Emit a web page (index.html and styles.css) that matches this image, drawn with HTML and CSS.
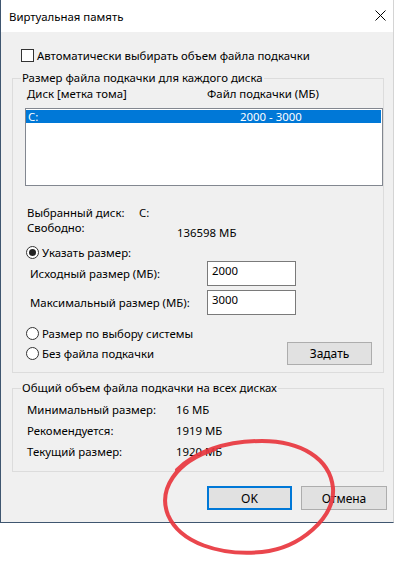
FILE: index.html
```html
<!DOCTYPE html>
<html lang="ru">
<head>
  <meta charset="UTF-8" />
  <title>Виртуальная память</title>
  <meta name="viewport" content="width=device-width, initial-scale=1.0"/>
  <link rel="stylesheet" href="styles.css">
</head>
<body>

<div class="window">
  <div class="titlebar">
    <span class="title">Виртуальная память</span>
    <svg class="close" width="11" height="11" viewBox="0 0 11 11"><path d="M0.5 0.5L10.5 10.5M10.5 0.5L0.5 10.5" stroke="#000" stroke-width="1"/></svg>
  </div>

  <div class="body">
    <div class="check-row"><span class="checkbox"></span>Автоматически выбирать объем файла подкачки</div>

    <div class="group group-disks">
      <div class="group-title">Размер файла подкачки для каждого диска</div>
      <div class="list-head"><span class="col-disk">Диск [метка тома]</span><span>Файл подкачки (МБ)</span></div>
      <div class="list">
        <div class="list-row selected"><span class="col-drive">C:</span><span>2000 - 3000</span></div>
      </div>

      <div class="info">
        <div class="info-row"><span class="info-label">Выбранный диск:</span><span>C:</span></div>
        <div class="info-row"><span class="info-label wide">Свободно:</span><span class="free-value">136598 МБ</span></div>
      </div>

      <div class="radio-row first"><span class="radio checked"></span>Указать размер:</div>
      <div class="size-row"><span class="size-label">Исходный размер (МБ):</span><div class="field">2000</div></div>
      <div class="size-row second"><span class="size-label">Максимальный размер (МБ):</span><div class="field">3000</div></div>

      <div class="radio-row system"><span class="radio"></span>Размер по выбору системы</div>
      <div class="set-row">
        <div class="radio-row"><span class="radio"></span>Без файла подкачки</div>
        <button class="btn">Задать</button>
      </div>
    </div>

    <div class="group group-total">
      <div class="group-title">Общий объем файла подкачки на всех дисках</div>
      <div class="totals">
        <div class="total-row"><span class="total-label">Минимальный размер:</span><span>16 МБ</span></div>
        <div class="total-row"><span class="total-label">Рекомендуется:</span><span>1919 МБ</span></div>
        <div class="total-row"><span class="total-label">Текущий размер:</span><span>1920 МБ</span></div>
      </div>
    </div>

    <div class="actions">
      <button class="btn default">OK</button>
      <button class="btn">Отмена</button>
    </div>
  </div>
</div>

<!-- red marker loop drawn over the OK button -->
<svg class="marker" width="396" height="568" viewBox="0 0 396 568">
  <path d="M177 470 C195 452, 225 441, 262 441 C300 441, 330 458, 333 488 C335 518, 300 548, 262 552 C220 556, 180 543, 168 515 C158 490, 175 462, 215 449"
        fill="none" stroke="#e8363e" stroke-width="4" stroke-linecap="round" opacity="0.92"/>
</svg>

</body>
</html>
```

FILE: styles.css
```css
body { margin: 0; background: #fff; color: #000; font-family: "Noto Sans", "Open Sans", sans-serif; font-size: 11.4px; }

.window {
  position: relative;
  width: 394px; box-sizing: border-box;
  border-left: 1px solid #3f5670; border-right: 1px solid #d4d4d4; border-bottom: 1px solid #3f5670;
}
.titlebar {
  height: 32px; background: #fff;
  display: flex; align-items: center; justify-content: space-between;
  padding: 0 7px 0 8px;
}
.close { margin-top: -1px; }

.body { background: #f0f0f0; height: 490px; padding-top: 15px; box-sizing: border-box; }

.check-row { display: flex; align-items: center; height: 16px; padding-left: 20px; }
.checkbox { width: 13px; height: 13px; box-sizing: border-box; border: 1px solid #333; background: #fff; margin-right: 3px; }

.group { width: 372px; box-sizing: border-box; margin-left: 11px; border: 1px solid #dcdcdc; }
.group-disks { margin-top: 15px; padding-bottom: 7px; }
.group-total { margin-top: 15px; padding-bottom: 9px; }
.group-title {
  width: max-content; margin: -9px 0 0 8px; padding: 0 1px;
  line-height: 16px; background: #f0f0f0;
}

.list-head { display: flex; line-height: 16px; padding-left: 14px; }
.col-disk { width: 180px; }

.list {
  margin: 6px 0 0 12px; width: 358px; height: 78px; box-sizing: border-box;
  border: 1px solid #828790; background: #fff; padding-top: 1px;
}
.list-row { display: flex; height: 13px; line-height: 13px; padding-left: 2px; margin-right: 1px; }
.list-row.selected { background: #0078d7; color: #fff; }
.col-drive { width: 212px; }

.info { margin-top: 19px; }
.info-row { display: flex; align-items: flex-start; line-height: 15px; padding-left: 14px; }
.info-label { width: 112px; }
.info-label.wide { width: 150px; }
.free-value { margin-top: 5px; }

.radio-row { display: flex; align-items: center; height: 16px; padding-left: 13px; }
.radio-row.first { margin-top: 4px; }
.radio-row.system { margin-top: 10px; }
.radio {
  width: 13px; height: 13px; box-sizing: border-box; border: 1px solid #333; border-radius: 50%;
  background: #fff; margin-right: 3px; display: flex; align-items: center; justify-content: center;
}
.radio.checked::after { content: ""; width: 7px; height: 7px; border-radius: 50%; background: #222; }

.size-row { display: flex; align-items: center; height: 25px; margin-top: 1px; padding-left: 17px; }
.size-row.second { margin-top: 4px; }
.size-label { width: 177px; }
.field {
  width: 89px; height: 25px; box-sizing: border-box; border: 1px solid #7a7a7a; background: #fff;
  padding: 1px 0 0 4px; line-height: 16px;
}

.set-row { display: flex; align-items: center; justify-content: space-between; height: 23px; margin-top: 1px; padding-right: 11px; }

.btn {
  width: 85px; height: 23px; box-sizing: border-box; padding: 0;
  border: 1px solid #adadad; background: #e1e1e1; color: #000;
  font-family: inherit; font-size: 12px;
}
.btn.default { border: 2px solid #0078d7; }

.totals { margin-top: 3px; }
.total-row { display: flex; align-items: center; height: 21px; padding-left: 14px; }
.total-label { width: 149px; }

.actions { display: flex; justify-content: flex-end; gap: 9px; margin-top: 14px; padding-right: 6px; }
.actions .btn { height: 24px; }
.actions .btn:last-child { width: 86px; }

.marker { position: absolute; left: 0; top: 0; pointer-events: none; }
```
